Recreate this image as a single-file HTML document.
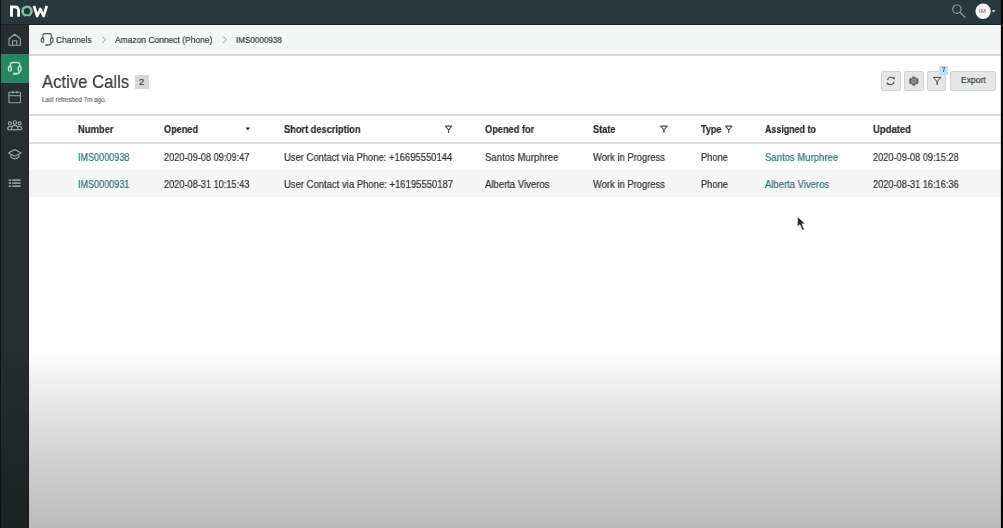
<!DOCTYPE html>
<html><head><meta charset="utf-8">
<style>
*{margin:0;padding:0;box-sizing:border-box}
html,body{width:1003px;height:528px;overflow:hidden;background:#fff;font-family:"Liberation Sans",sans-serif;color:#2e3333}
.abs{position:absolute}
.t{position:absolute;white-space:nowrap;line-height:1;transform-origin:0 0;-webkit-text-stroke:0.22px currentColor;will-change:transform}
#top{left:0;top:0;width:1003px;height:25px;background:#263839}
#topline{left:0;top:24px;width:1003px;height:1px;background:#1a2324}
#side{left:0;top:25px;width:29px;height:503px;background:#252f2f}
#sideedge{left:0;top:0;width:1px;height:528px;background:#121616}
#sideedge2{left:28px;top:25px;width:1px;height:503px;background:#1c2424}
#active{left:1px;top:54px;width:28px;height:29px;background:#258764}
#crumb{left:29px;top:25px;width:972px;height:29px;background:#f4f5f5}
#crumbline{left:29px;top:54px;width:972px;height:2px;background:#d6d8d8}
#rightedge{left:1001px;top:0;width:2px;height:528px;background:#060606}
#rightline{left:1000px;top:25px;width:1px;height:503px;background:rgba(120,120,120,0.25)}
#shade{left:0;top:350px;width:1003px;height:178px;background:linear-gradient(to bottom,rgba(0,0,0,0) 0%,rgba(0,0,0,0.035) 10%,rgba(0,0,0,0.11) 35%,rgba(0,0,0,0.19) 65%,rgba(0,0,0,0.265) 100%)}
.btn{position:absolute;top:71px;height:20px;background:#e5e6e6;border:1px solid #d0d2d2;border-radius:2px}
svg{position:absolute;overflow:visible}
</style></head><body>
<div id="wrap" style="position:absolute;left:0;top:0;width:1003px;height:528px;filter:blur(0.35px)">
<div id="top" class="abs"></div>
<div id="topline" class="abs"></div>
<div id="side" class="abs"></div>
<div id="sideedge2" class="abs"></div>
<div id="active" class="abs"></div>
<div id="sideedge" class="abs"></div>
<div id="crumb" class="abs"></div>
<div id="crumbline" class="abs"></div>

<!-- logo + header icons -->
<svg style="left:0;top:0" width="1003" height="25" viewBox="0 0 1003 25">
  <g fill="none" stroke-linecap="butt" stroke-linejoin="round">
    <path d="M11.5 16.8 V6.8 H14.6 Q18.6 6.8 18.6 10.8 V16.8" stroke="#fff" stroke-width="2.8" stroke-linejoin="miter"/>
    <circle cx="27" cy="11.2" r="4.45" stroke="#7fbc9e" stroke-width="2.7"/>
    <path d="M34 6 L37.2 16 L40.4 9 L43.6 16 L46.8 6" stroke="#fff" stroke-width="2.7"/>
  </g>
  <ellipse cx="27" cy="16.9" rx="1.6" ry="0.9" fill="#223334"/>
  <circle cx="47.6" cy="16" r="0.6" fill="#9aa"/>
  <g fill="none" stroke="#8c9a9a" stroke-width="1.2">
    <circle cx="956.9" cy="9.2" r="4.2"/>
    <path d="M959.9 12.3 L965 17.2" stroke-linecap="round"/>
  </g>
  <circle cx="983.1" cy="11.3" r="7.7" fill="#f7f7f7"/>
  <path d="M991.6 10.2 H995.4 L993.5 12.4 Z" fill="#e8eeee"/>
</svg>

<!-- sidebar icons -->
<svg style="left:0;top:25px" width="28" height="200" viewBox="0 25 28 200">
  <g fill="none" stroke="#9aa4a4" stroke-width="1.1" stroke-linejoin="round">
    <path d="M9 45.3 V38.7 L14.7 34.2 L20.4 38.7 V45.3 Z"/>
    <path d="M12.6 45.3 V40.8 H16.8 V45.3"/>
    <rect x="8.9" y="92.3" width="11.6" height="10.4" rx="0.8"/>
    <path d="M8.9 95.7 H20.5"/>
    <!-- grad cap -->
    <path d="M8.5 153 L14.8 149.6 L21.1 153 L14.8 156.2 Z"/>
    <path d="M10.8 154.5 V157 Q14.8 160.8 18.8 157 V154.5"/>
  </g>
  <g fill="#9aa4a4">
    <rect x="12" y="91" width="1.6" height="2.6" rx="0.8"/>
    <rect x="16" y="91" width="1.6" height="2.6" rx="0.8"/>
    <rect x="8.7" y="179.3" width="2.4" height="1.6"/>
    <rect x="12.2" y="179.3" width="8.3" height="1.6"/>
    <rect x="8.7" y="182.3" width="2.4" height="1.6"/>
    <rect x="12.2" y="182.3" width="8.3" height="1.6"/>
    <rect x="8.7" y="185.3" width="2.4" height="1.6"/>
    <rect x="12.2" y="185.3" width="8.3" height="1.6"/>
  </g>
  <!-- people -->
  <g fill="none" stroke="#9aa4a4" stroke-width="1.1">
    <circle cx="9.9" cy="123.4" r="1.5"/>
    <circle cx="14.8" cy="122.4" r="1.7"/>
    <circle cx="19.6" cy="123.4" r="1.5"/>
    <path d="M7.6 129.6 Q7.6 126.2 9.9 126.2 Q11.6 126.2 12 127.4"/>
    <path d="M21.9 129.6 Q21.9 126.2 19.6 126.2 Q17.9 126.2 17.5 127.4"/>
    <path d="M11.4 129.8 Q11.4 125.4 14.8 125.4 Q18.1 125.4 18.1 129.8 Z"/>
    <path d="M7.6 129.6 H21.9"/>
  </g>
  <!-- headset active -->
  <g fill="none" stroke="#bfe8d2" stroke-width="1.4" stroke-linejoin="round">
    <path d="M10.4 67 V64.6 Q10.4 62.5 12.5 62.5 H17.6 Q19.7 62.5 19.7 64.6 V67"/>
    <rect x="8.5" y="66.3" width="2.8" height="4.8" rx="1.4"/>
    <rect x="18.2" y="66.3" width="2.8" height="4.8" rx="1.4"/>
    <path d="M19.7 71 Q19.6 73.6 17 73.7"/>
  </g>
  <rect x="12.8" y="72.7" width="4.8" height="2.1" rx="1" fill="#bfe8d2"/>
</svg>

<!-- breadcrumb headset + chevrons -->
<svg style="left:0;top:0" width="300" height="60" viewBox="0 0 300 60">
  <g fill="none" stroke="#4d5252" stroke-width="1.1" stroke-linejoin="round">
    <path d="M42.9 38.6 V35.6 Q42.9 33.6 44.9 33.6 H49.4 Q51.4 33.6 51.4 35.6 V38.6"/>
    <rect x="41.2" y="37.9" width="2.6" height="4.4" rx="1.3"/>
    <rect x="50.5" y="37.9" width="2.6" height="4.4" rx="1.3"/>
    <path d="M51.4 42.2 Q51.3 44.8 48.8 44.9"/>
  </g>
  <rect x="45.2" y="44.2" width="3.8" height="1.5" rx="0.7" fill="#4d5252"/>
  <g fill="none" stroke="#8c9292" stroke-width="0.9">
    <path d="M102.4 36.6 L105.6 39.8 L102.4 43"/>
    <path d="M223.2 36.6 L226.4 39.8 L223.2 43"/>
  </g>
</svg>

<!-- title badge -->
<div class="abs" style="left:135px;top:75px;width:14px;height:14px;background:#d7d9d9"></div>

<!-- buttons -->
<div class="btn" style="left:881px;width:20px"></div>
<div class="btn" style="left:904px;width:20px"></div>
<div class="btn" style="left:927px;width:19px"></div>
<div class="btn" style="left:950px;width:46px"></div>
<div class="abs" style="left:939px;top:66px;width:9px;height:8.5px;background:#c2e1ec"></div>
<svg style="left:870px;top:60px" width="90" height="40" viewBox="870 60 90 40">
  <g fill="none" stroke="#474c4c" stroke-width="1.1">
    <path d="M887.5 80.2 A3.4 3.4 0 0 1 893.6 78.6"/>
    <path d="M894.1 81.7 A3.4 3.4 0 0 1 888 83.3"/>
  </g>
  <path d="M892.4 77.4 L894.9 77.2 L894.5 79.8 Z" fill="#474c4c"/>
  <path d="M889.2 84.5 L886.7 84.7 L887.1 82.1 Z" fill="#474c4c"/>
  <g transform="translate(913.8 81.1)">
    <path d="M-1.2 -4.4 H1.2 L1.5 -3.3 L2.5 -2.7 L3.6 -3.0 L4.8 -0.9 L4.0 0 L4.8 0.9 L3.6 3.0 L2.5 2.7 L1.5 3.3 L1.2 4.4 H-1.2 L-1.5 3.3 L-2.5 2.7 L-3.6 3.0 L-4.8 0.9 L-4.0 0 L-4.8 -0.9 L-3.6 -3.0 L-2.5 -2.7 L-1.5 -3.3 Z" fill="#5f6464" stroke="#5f6464" stroke-width="0.3" stroke-linejoin="round"/>
    <circle r="2.5" fill="#9a9e9e"/>
    <circle r="1.4" fill="#6a6f6f"/>
    <circle r="0.7" fill="#a5a9a9"/>
  </g>
  <path d="M933.3 77.4 H940.9 L937.1 81.7 Z" fill="none" stroke="#474c4c" stroke-width="1" stroke-linejoin="round"/>
  <path d="M937.1 81.4 V85.1" stroke="#474c4c" stroke-width="1.3"/>
</svg>

<!-- table -->
<div class="abs" style="left:29px;top:114px;width:972px;height:2px;background:#dcdddd"></div>
<div class="abs" style="left:29px;top:142px;width:972px;height:2px;background:#dcdddd"></div>
<div class="abs" style="left:29px;top:170px;width:972px;height:27px;background:#f5f5f6"></div>
<svg style="left:0;top:110px" width="1003" height="30" viewBox="0 110 1003 30">
  <path d="M245.5 127.6 H250.1 L247.8 130.3 Z" fill="#222"/>
  <g fill="none" stroke="#4a4f4f" stroke-width="1.1" stroke-linejoin="round">
    <path d="M445.4 126.1 H451.8 L448.6 130 Z"/>
    <path d="M660.7 126.1 H667.1 L663.9 130 Z"/>
    <path d="M725.5 126.1 H731.9 L728.7 130 Z"/>
  </g>
  <g stroke="#4a4f4f" stroke-width="1.3">
    <path d="M448.6 129.5 V132.8"/>
    <path d="M663.9 129.5 V132.8"/>
    <path d="M728.7 129.5 V132.8"/>
  </g>
</svg>

<div class="t" style="left:55.95px;top:35.58px;font-size:9.0px;font-weight:400;color:#3a3f3f;transform:scaleX(0.9362)">Channels</div>
<div class="t" style="left:114.95px;top:35.58px;font-size:9.0px;font-weight:400;color:#3a3f3f;transform:scaleX(0.9405)">Amazon Connect (Phone)</div>
<div class="t" style="left:235.95px;top:35.58px;font-size:9.0px;font-weight:400;color:#3a3f3f;transform:scaleX(0.8993)">IMS0000938</div>
<div class="t" style="left:41.70px;top:72.96px;font-size:18.0px;font-weight:400;color:#363b3b;transform:scaleX(0.9274)">Active Calls</div>
<div class="t" style="left:138.53px;top:77.04px;font-size:9.4px;font-weight:400;color:#383d3d;transform:scaleX(0.9945)">2</div>
<div class="t" style="left:42.34px;top:96.01px;font-size:7.2px;font-weight:400;color:#6e7373;transform:scaleX(0.8698)">Last refreshed 7m ago.</div>
<div class="t" style="left:960.64px;top:76.41px;font-size:9.2px;font-weight:400;color:#3a3f3f;transform:scaleX(0.9327)">Export</div>
<div class="t" style="left:941.67px;top:67.01px;font-size:6.6px;font-weight:400;color:#2e4a5c;transform:scaleX(0.9261)">7</div>
<div class="t" style="left:979.29px;top:8.35px;font-size:6.2px;font-weight:400;color:#8f8f8f;transform:scaleX(0.9873)">IM</div>
<div class="t" style="left:77.77px;top:123.81px;font-size:10.5px;font-weight:700;color:#2a2e2e;transform:scaleX(0.8973)">Number</div>
<div class="t" style="left:164.17px;top:123.81px;font-size:10.5px;font-weight:700;color:#2a2e2e;transform:scaleX(0.8698)">Opened</div>
<div class="t" style="left:284.08px;top:123.81px;font-size:10.5px;font-weight:700;color:#2a2e2e;transform:scaleX(0.8801)">Short description</div>
<div class="t" style="left:485.08px;top:123.81px;font-size:10.5px;font-weight:700;color:#2a2e2e;transform:scaleX(0.8785)">Opened for</div>
<div class="t" style="left:593.18px;top:123.81px;font-size:10.5px;font-weight:700;color:#2a2e2e;transform:scaleX(0.8763)">State</div>
<div class="t" style="left:700.58px;top:123.81px;font-size:10.5px;font-weight:700;color:#2a2e2e;transform:scaleX(0.8555)">Type</div>
<div class="t" style="left:764.88px;top:123.81px;font-size:10.5px;font-weight:700;color:#2a2e2e;transform:scaleX(0.8454)">Assigned to</div>
<div class="t" style="left:872.88px;top:123.81px;font-size:10.5px;font-weight:700;color:#2a2e2e;transform:scaleX(0.9048)">Updated</div>
<div class="t" style="left:77.79px;top:152.77px;font-size:10.2px;font-weight:400;color:#2f7772;transform:scaleX(0.8903)">IMS0000938</div>
<div class="t" style="left:163.99px;top:152.77px;font-size:10.2px;font-weight:400;color:#2f3434;transform:scaleX(0.9027)">2020-09-08 09:09:47</div>
<div class="t" style="left:284.09px;top:152.77px;font-size:10.2px;font-weight:400;color:#2f3434;transform:scaleX(0.9271)">User Contact via Phone: +16695550144</div>
<div class="t" style="left:485.09px;top:152.77px;font-size:10.2px;font-weight:400;color:#2f3434;transform:scaleX(0.9407)">Santos Murphree</div>
<div class="t" style="left:593.19px;top:152.77px;font-size:10.2px;font-weight:400;color:#2f3434;transform:scaleX(0.9239)">Work in Progress</div>
<div class="t" style="left:700.59px;top:152.77px;font-size:10.2px;font-weight:400;color:#2f3434;transform:scaleX(0.9120)">Phone</div>
<div class="t" style="left:764.89px;top:152.77px;font-size:10.2px;font-weight:400;color:#2f7772;transform:scaleX(0.9368)">Santos Murphree</div>
<div class="t" style="left:872.89px;top:152.77px;font-size:10.2px;font-weight:400;color:#2f3434;transform:scaleX(0.9059)">2020-09-08 09:15:28</div>
<div class="t" style="left:77.79px;top:179.57px;font-size:10.2px;font-weight:400;color:#2f7772;transform:scaleX(0.8903)">IMS0000931</div>
<div class="t" style="left:163.99px;top:179.57px;font-size:10.2px;font-weight:400;color:#2f3434;transform:scaleX(0.9027)">2020-08-31 10:15:43</div>
<div class="t" style="left:284.09px;top:179.57px;font-size:10.2px;font-weight:400;color:#2f3434;transform:scaleX(0.9315)">User Contact via Phone: +16195550187</div>
<div class="t" style="left:485.09px;top:179.57px;font-size:10.2px;font-weight:400;color:#2f3434;transform:scaleX(0.9365)">Alberta Viveros</div>
<div class="t" style="left:593.19px;top:179.57px;font-size:10.2px;font-weight:400;color:#2f3434;transform:scaleX(0.9239)">Work in Progress</div>
<div class="t" style="left:700.59px;top:179.57px;font-size:10.2px;font-weight:400;color:#2f3434;transform:scaleX(0.9120)">Phone</div>
<div class="t" style="left:764.89px;top:179.57px;font-size:10.2px;font-weight:400;color:#2f7772;transform:scaleX(0.9321)">Alberta Viveros</div>
<div class="t" style="left:872.89px;top:179.57px;font-size:10.2px;font-weight:400;color:#2f3434;transform:scaleX(0.9059)">2020-08-31 16:16:36</div>

<!-- cursor -->
<svg style="left:0;top:0" width="1003" height="528" viewBox="0 0 1003 528">
  <path d="M797.8 217 L797.4 226.6 L799.9 224.4 L802.4 230.2 L804.2 229.4 L801.8 223.8 L805 223.7 Z" fill="#1f2a28" stroke="#fff" stroke-width="0.4"/>
</svg>

<div id="shade" class="abs"></div>
<div id="rightline" class="abs"></div>
<div id="rightedge" class="abs"></div>
</div>
</body></html>
